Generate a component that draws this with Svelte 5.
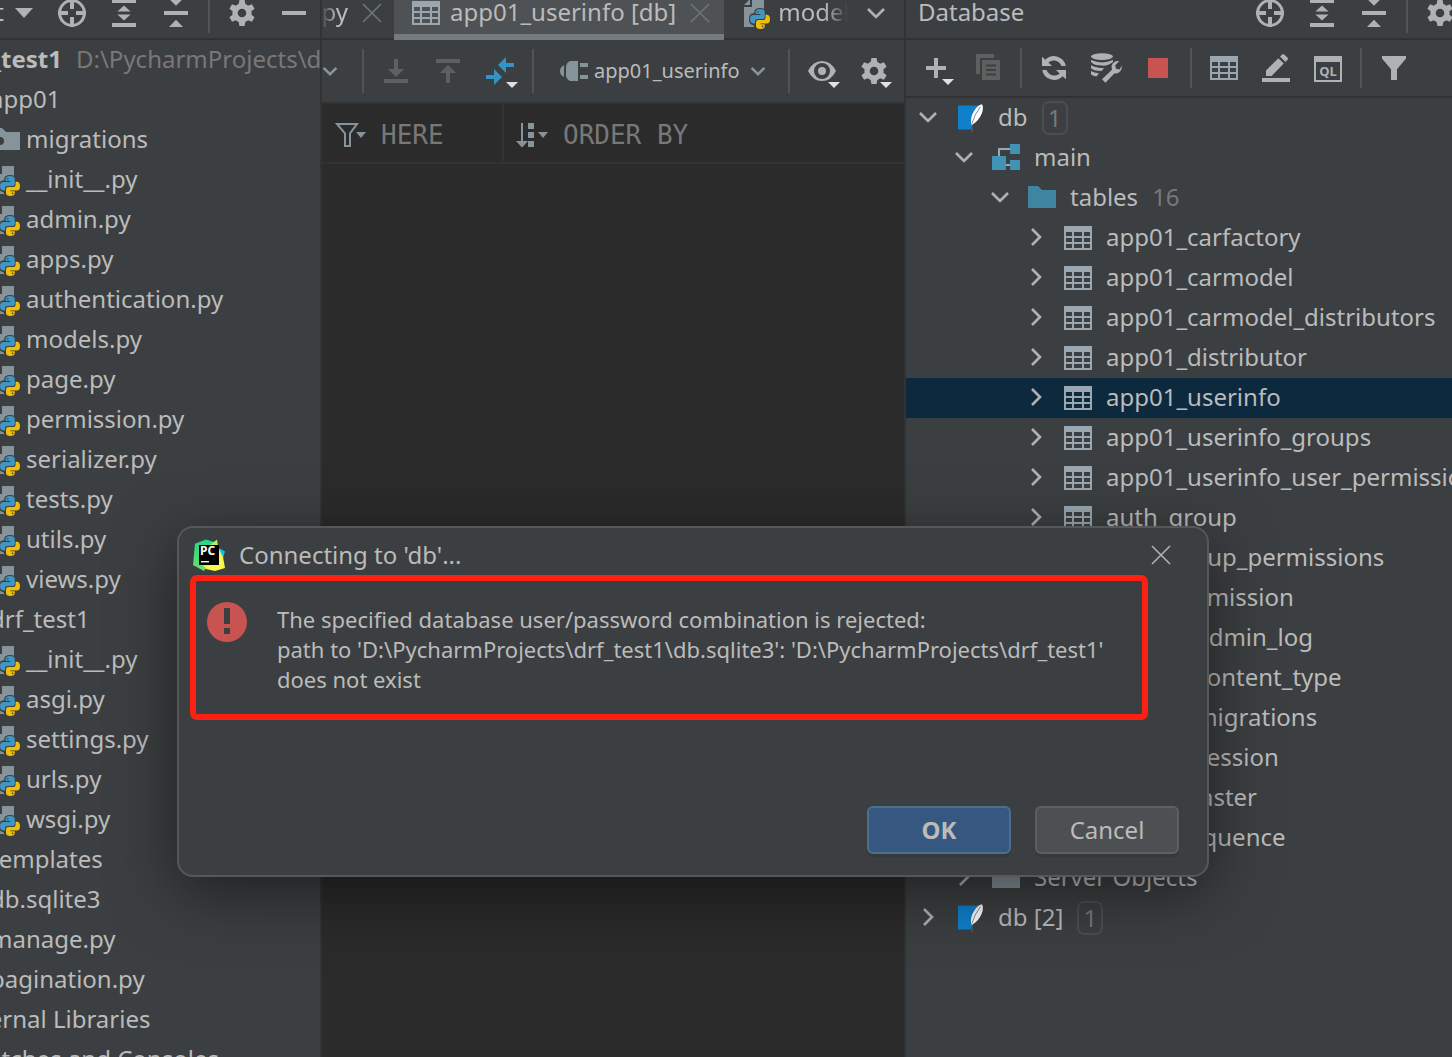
<script lang="ts">
  interface ProjectRow {
    label: string;
    depth: number;
    icon?: string;
    path?: string;
  }

  interface DbRow {
    label: string;
    depth: number;
    icon: string;
    open?: boolean;
    count?: string;
    badge?: string;
  }

  const projectRows: ProjectRow[] = [
    { label: "drf_test1", depth: 0, icon: "folder", path: "D:\\PycharmProjects\\drf_test1" },
    { label: "app01", depth: 1, icon: "package" },
    { label: "migrations", depth: 2, icon: "package" },
    ...["__init__.py", "admin.py", "apps.py", "authentication.py", "models.py", "page.py",
      "permission.py", "serializer.py", "tests.py", "utils.py", "views.py"].map((label) => ({
      label,
      depth: 2,
      icon: "python",
    })),
    { label: "drf_test1", depth: 1, icon: "package" },
    ...["__init__.py", "asgi.py", "settings.py", "urls.py", "wsgi.py"].map((label) => ({
      label,
      depth: 2,
      icon: "python",
    })),
    { label: "templates", depth: 1, icon: "folder" },
    { label: "db.sqlite3", depth: 1, icon: "sqlite" },
    { label: "manage.py", depth: 1, icon: "python" },
    { label: "pagination.py", depth: 1, icon: "python" },
    { label: "External Libraries", depth: 0, icon: "folder" },
    { label: "Scratches and Consoles", depth: 0, icon: "folder" },
  ];

  const tables = [
    "app01_carfactory",
    "app01_carmodel",
    "app01_carmodel_distributors",
    "app01_distributor",
    "app01_userinfo",
    "app01_userinfo_groups",
    "app01_userinfo_user_permissions",
    "auth_group",
    "auth_group_permissions",
    "auth_permission",
    "django_admin_log",
    "django_content_type",
    "django_migrations",
    "django_session",
    "sqlite_master",
    "sqlite_sequence",
  ];

  const dbRows: DbRow[] = [
    { label: "db", depth: 0, icon: "sqlite", open: true, badge: "1" },
    { label: "main", depth: 1, icon: "schema", open: true },
    { label: "tables", depth: 2, icon: "folder-blue", open: true, count: String(tables.length) },
    ...tables.map((label) => ({ label, depth: 3, icon: "table" })),
    { label: "Server Objects", depth: 1, icon: "folder" },
    { label: "db [2]", depth: 0, icon: "sqlite", badge: "1" },
  ];

  let selected = $state("app01_userinfo");
  let dialogOpen = $state(true);

  // Single-colour icons on a 16 unit grid
  const paths: Record<string, string> = {
    triangle: "M3.5 5.5h9L8 10.5z",
    expand: "M2 1h12v2H2zM2 13h12v2H2zM8 4.2l3.3 3H4.7zM8 11.8l3.3-3H4.7z",
    collapse: "M2 7h12v2H2zM8 4.4l3.8-3.8H4.2zM8 11.4l3.5 3.6h-7z",
    minus: "M2 7h12v2H2z",
    plus: "M7 3h2v4h4v2H9v4H7V9H3V7h4z",
    copy: "M2 1h9v2H4v8H2zM5 4h9v10H5zM7 6.3v1h5v-1zM7 8.5v1h5v-1zM7 10.7v1h5v-1z",
    stop: "M3 3h10v10H3z",
    table:
      "M1 2h14v12H1zM2 5v2h3V5zM6 5v2h4V5zM11 5v2h3V5zM2 8v2h3V8zM6 8v2h4V8zM11 8v2h3V8zM2 11v2h3v-2zM6 11v2h4v-2zM11 11v2h3v-2z",
    pencil: "M1 13h14v2H1zM3 12V9.2l6.2-6.1 2.7 2.7L5.8 12zM10 2.3l1.1-1.1q.5-.4 1 0l1.7 1.7q.4.5 0 1L12.7 5z",
    funnel: "M2 2h12v1.2L9.5 8.6V14h-3V8.6L2 3.2z",
    download: "M7 2h2v5h3l-4 4-4-4h3zM2 12h12v2H2z",
    upload: "M2 2h12v2H2zM8 5l4 4H9v5H7V9H4z",
    swap: "M7 5l4-4v3h4v2h-4v3zM1 10h4V7l4 4-4 4v-3H1z",
    plug: "M3 5v6Q1 10 1 8t2-3zM6 3h4v10H6Q4 12 4 10V6q0-2 2-3zM11 4h4v2h-4zM11 10h4v2h-4z",
    refresh:
      "M2 2.4l1.7 1.5A6 6 0 0 1 13.9 7h-2.2A4 4 0 0 0 5.2 5.3L7 7H2zM14 13.6l-1.7-1.5A6 6 0 0 1 2.1 9h2.2a4 4 0 0 0 6.5 1.7L9 9h5z",
    eye: "M1 8q2.5-5 7-5t7 5q-2.5 5-7 5T1 8zM8 4a4 4 0 1 0 0 8 4 4 0 0 0 0-8zM8 6a2 2 0 1 1 0 4 2 2 0 0 1 0-4z",
    folder: "M1 2h5l2 2h7v9H1z",
    package: "M1 2h5l2 2h7v9H1zM5 6.5a2 2 0 1 0 0 4 2 2 0 0 0 0-4z",
    "folder-blue": "M1 2h5l2 2h7v9H1z",
    sort: "M3.5 2h1v9H7l-3 3.2L1 11h2.5zM7 2h3v3H7zM7 6.5h3v3H7zM7 11h3v3H7z",
  };

  // Line icons, drawn with a stroke
  const lines: Record<string, string> = {
    down: "M4 6l4 4 4-4",
    right: "M6 4l4 4-4 4",
    "small-down": "M4.8 6.4L8 9.6l3.2-3.2",
    close: "M3.5 3.5l9 9M12.5 3.5l-9 9",
    "funnel-line": "M1.5 2.5h10L8 7.2v6.3H5.5V7.2z",
  };
</script>

{#snippet icon(name: string, drop = false)}
  <svg class="icon {name}" viewBox="0 0 16 16" aria-hidden="true">
    {#if paths[name]}
      <path d={paths[name]} fill="currentColor" fill-rule="evenodd" />
    {:else if lines[name]}
      <path d={lines[name]} fill="none" stroke="currentColor" />
    {:else if name === "target"}
      <circle cx="8" cy="8" r="6.2" fill="none" stroke="currentColor" stroke-width="1.5" />
      <path d="M7 1h2v5H7zM7 10h2v5H7zM1 7h5v2H1zM10 7h5v2h-5z" fill="currentColor" />
    {:else if name === "gear"}
      <circle cx="8" cy="8" r="3.5" fill="none" stroke="currentColor" stroke-width="2.7" />
      {#each [0, 60, 120, 180, 240, 300] as angle}
        <path d="M6.7 1.5h2.6l.4 2.4H6.3z" fill="currentColor" transform="rotate({angle} 8 8)" />
      {/each}
    {:else if name === "database-wrench"}
      <ellipse cx="6" cy="2.3" rx="5.5" ry="1.7" fill="currentColor" />
      <path
        d="M.5 4q5.5 2.4 11 0v1Q9 7 6 6.8 2 6.8.5 5zM.5 6.6Q3 8 7 8L5.8 9.5Q1.500 9.500.5 8zM.5 9.5q1.500 1 4 1.100L3.200 12.200Q1 12 .5 11z"
        fill="currentColor"
      />
      <path
        d="M6 13.6l5-4.700Q10.200 6.200 12.200 5q1.200-.8 2.400-.4l-2 2 .4 1.800 1.800.3 1-1.800q.4 2.200-1.300 3.300-1.200.7-2.200.4L7.700 15.400z"
        fill="currentColor"
      />
    {:else if name === "ql"}
      <path d="M1 2h14v13H1zM2 5v9h12V5z" fill="currentColor" fill-rule="evenodd" />
      <text x="8" y="12" text-anchor="middle" font-size="6.5" font-weight="700" fill="currentColor">QL</text>
    {:else if name === "schema"}
      <path d="M4.5 7V3.5H10M8 11.5h2" fill="none" stroke="#9aa7b0" />
      <path d="M10 1h5v5h-5zM1 7h7v7H1zM10 9h5v5h-5z" fill="#4193b3" />
    {:else if name === "sqlite"}
      <g transform="translate(1 0)">
        <path d="M1.5 1.8h10Q8.500 4.500 7.800 7.500L7.600 13.700H1.500q-.5 0-.5-.5V2.300q0-.5.500-.5z" fill="#0f80cc" />
        <path d="M7.700 11.800Q6.900 8 8.800 4.900 10.600 1.500 13 1.100q1 1.700-.1 4.700-1.600 3.600-4.200 5.200z" fill="#fff" />
        <path d="M12.200 2.400Q9 6.500 7.900 11l.2 4" fill="none" stroke="#66737c" stroke-width=".4" />
      </g>
    {:else if name === "python"}
      <path d="M2 5h4V1h6v14H2zM2 4l3-3v3z" fill="#87939a" />
      <g transform="translate(5 6)">
        <path
          d="M5 0Q2.600 0 2.600 1.800V2.600H1.800Q0 2.600 0 5t1.600 2.600h.8V8.400Q2.600 10 5.200 10t2.600-1.800V7.600h.7Q10 7.400 10 5T8.300 2.500H7.600V1.700Q7.400 0 5 0z"
          fill="#3c3f41"
          stroke="#3c3f41"
        />
        <path d="M5 0Q2.800 0 2.800 1.600V2.500H5.200V3H1.700Q0 3 0 5t1.700 2.300h.8V6.200Q2.500 5 3.800 5h2.600Q7.400 5 7.400 4V1.600Q7.400 0 5 0z" fill="#4296c3" />
        <path d="M5.200 10q2.200 0 2.200-1.500V7.600H5.200v-.4h3.200Q10 7.200 10 5.100T8.400 2.900h-.6v1.200q0 1.400-1.300 1.400H4.200Q3 5.500 3 6.600v1.900Q3 10 5.200 10z" fill="#f0bd0a" />
        <circle cx="3.9" cy="1.5" r=".4" fill="#3c3f41" />
        <circle cx="6.3" cy="8.7" r=".4" fill="#3c3f41" />
      </g>
    {:else if name === "pycharm"}
      <defs>
        <linearGradient id="pc-green" x1="0" y1="0" x2="0" y2="1">
          <stop offset="0" stop-color="#21d789" />
          <stop offset="1" stop-color="#6be06a" />
        </linearGradient>
        <linearGradient id="pc-yellow" x1="0" y1="0" x2="1" y2="1">
          <stop offset="0" stop-color="#5fdc74" />
          <stop offset=".6" stop-color="#fcf84a" />
        </linearGradient>
      </defs>
      <path d="M12 4l4 2.200-1.200 4L12 9z" fill="#07c3f2" />
      <path d="M1 2.400L6.500.2 10.500 1.500V9L5.500 16 0 13z" fill="url(#pc-green)" />
      <path d="M8 3.200L12 .2l.6 4L15 9l1 5.500-5 1.500-4.500-1L4 12z" fill="url(#pc-yellow)" />
      <path d="M3 3h10v10H3z" fill="#000" />
      <text x="3.500" y="8.200" font-size="6" font-weight="700" fill="#fff">PC</text>
      <path d="M4 11h4v.7H4z" fill="#fff" />
    {:else if name === "error"}
      <path d="M8 0a8 8 0 1 0 0 16A8 8 0 0 0 8 0zM6.8 2.400h2.400v6.400H6.800zM6.800 10.400h2.400v2.400H6.800z" fill="currentColor" fill-rule="evenodd" />
    {/if}
    {#if drop}
      <path class="drop" d="M11 13.5h6l-3 3z" />
    {/if}
  </svg>
{/snippet}

{#snippet tool(name: string, label: string, drop = false)}
  <button class="tool" aria-label={label}>{@render icon(name, drop)}</button>
{/snippet}

<div class="ide">
  <section class="panel project">
    <header class="head project-head">
      <span>Project</span>
      {@render icon("triangle")}
      <div class="tools">
        {@render tool("target", "Select opened file")}
        {@render tool("expand", "Expand all")}
        {@render tool("collapse", "Collapse all")}
        <i class="sep"></i>
        {@render tool("gear", "Options")}
        {@render tool("minus", "Hide")}
      </div>
    </header>
    <ul class="tree project-tree">
      {#each projectRows as row}
        <li class="row depth-{row.depth}">
          {@render icon(row.icon ?? "folder")}
          <span class:root={row.path}>{row.label}</span>
          {#if row.path}<span class="path">{row.path}</span>{/if}
        </li>
      {/each}
    </ul>
  </section>

  <section class="panel editor">
    <div class="head tabs">
      <div class="tab tab-first">
        <span class="fade-left">py</span>
        <button class="close-tab" aria-label="Close tab">{@render icon("close")}</button>
      </div>
      <div class="tab active">
        {@render icon("table")}
        <span>app01_userinfo [db]</span>
        <button class="close-tab" aria-label="Close tab">{@render icon("close")}</button>
      </div>
      <div class="tab tab-last">
        {@render icon("python")}
        <span>models.py</span>
      </div>
      <button class="tool more" aria-label="More tabs">{@render icon("down")}</button>
    </div>

    <div class="toolbar editor-toolbar">
      <button class="tool muted" aria-label="Page">{@render icon("small-down")}</button>
      <i class="sep"></i>
      {@render tool("download", "Import")}
      {@render tool("upload", "Export")}
      {@render tool("swap", "Compare", true)}
      <i class="sep"></i>
      <label class="source">
        {@render icon("plug")}
        <select aria-label="Table">
          <option>app01_userinfo</option>
        </select>
        {@render icon("small-down")}
      </label>
      <i class="sep"></i>
      {@render tool("eye", "View", true)}
      {@render tool("gear", "Settings", true)}
    </div>

    <div class="filters">
      <label class="where">
        {@render icon("funnel-line")}
        <i class="mini"></i>
        <input placeholder="HERE" aria-label="Where" />
      </label>
      <label class="order">
        {@render icon("sort")}
        <i class="mini"></i>
        <input placeholder="ORDER BY" aria-label="Order by" />
      </label>
    </div>
    <div class="grid-area"></div>
  </section>

  <section class="panel database">
    <header class="head db-head">
      <span>Database</span>
      <div class="tools">
        {@render tool("target", "Select opened table")}
        {@render tool("expand", "Expand all")}
        {@render tool("collapse", "Collapse all")}
        <i class="sep"></i>
        {@render tool("gear", "Options")}
      </div>
    </header>
    <div class="toolbar db-toolbar">
      {@render tool("plus", "New", true)}
      {@render tool("copy", "Duplicate")}
      <i class="sep"></i>
      {@render tool("refresh", "Refresh")}
      {@render tool("database-wrench", "Data source properties")}
      {@render tool("stop", "Disconnect")}
      <i class="sep"></i>
      {@render tool("table", "Open table")}
      {@render tool("pencil", "Modify")}
      {@render tool("ql", "Query console")}
      <i class="sep"></i>
      {@render tool("funnel", "Filter")}
    </div>
    <ul class="tree db-tree">
      {#each dbRows as row}
        <li>
          <button
            class="row depth-{row.depth}"
            class:selected={row.label === selected}
            onclick={() => (selected = row.label)}
          >
            <span class="arrow">{@render icon(row.open ? "down" : "right")}</span>
            {@render icon(row.icon)}
            <span>{row.label}</span>
            {#if row.count}<span class="count">{row.count}</span>{/if}
            {#if row.badge}<span class="badge">{row.badge}</span>{/if}
          </button>
        </li>
      {/each}
    </ul>
  </section>
</div>

{#if dialogOpen}
  <div class="dialog" role="dialog" aria-labelledby="dialog-title">
    <div class="dialog-title">
      {@render icon("pycharm")}
      <span id="dialog-title">Connecting to 'db'...</span>
      <button class="tool" aria-label="Close" onclick={() => (dialogOpen = false)}>{@render icon("close")}</button>
    </div>
    <div class="message">
      {@render icon("error")}
      <p>
        The specified database user/password combination is rejected:<br />
        path to 'D:\PycharmProjects\drf_test1\db.sqlite3': 'D:\PycharmProjects\drf_test1'<br />
        does not exist
      </p>
    </div>
    <div class="actions">
      <button class="btn primary" onclick={() => (dialogOpen = false)}>OK</button>
      <button class="btn" onclick={() => (dialogOpen = false)}>Cancel</button>
    </div>
  </div>
{/if}

<style>
  :global(body) {
    background: #3c3f41;
    overflow: hidden;
  }

  .ide,
  .dialog {
    font-family: "Noto Sans", "Open Sans", sans-serif;
    font-size: 24px;
    line-height: 32px;
    color: #bbbbbb;
    white-space: nowrap;
  }

  .ide {
    display: grid;
    grid-template-columns: 322px minmax(0, 1fr) 546px;
    height: calc(100vh + 12px);
    margin-top: -12px;
    background: #3c3f41;
  }

  button,
  input,
  select {
    font: inherit;
    color: inherit;
    background: none;
    border: 0;
    margin: 0;
    padding: 0;
    outline: 0;
  }

  .panel {
    display: flex;
    flex-direction: column;
    min-width: 0;
    overflow: hidden;
  }

  .project,
  .editor {
    border-right: 2px solid #323232;
  }

  .icon {
    display: block;
    flex: none;
    width: 32px;
    height: 32px;
    overflow: visible;
    color: #afb1b3;
  }

  .drop {
    fill: #dfe1e3;
  }

  .head {
    display: flex;
    align-items: center;
    flex: none;
    box-sizing: border-box;
    height: 52px;
    border-bottom: 2px solid #323232;
  }

  .head span,
  .row > span:not(.badge) {
    padding-bottom: 2px;
  }

  .tools,
  .toolbar {
    display: flex;
    align-items: center;
    gap: 20px;
  }

  .tool {
    flex: none;
    width: 32px;
    height: 32px;
  }

  .sep {
    flex: none;
    width: 2px;
    height: 40px;
    margin: 0 -4px;
    background: #515354;
  }

  .project-head {
    justify-content: flex-end;
    gap: 4px;
    padding-right: 10px;
  }

  .project-head .tools {
    margin-left: 12px;
  }

  .db-head {
    justify-content: space-between;
    margin-right: -4px;
    padding-left: 12px;
  }

  .tree {
    list-style: none;
    margin: 0;
    padding: 0;
  }

  .row {
    display: flex;
    align-items: center;
    box-sizing: border-box;
    width: 100%;
    height: 40px;
    text-align: left;
  }

  .project-tree {
    margin-left: -82px;
  }

  .project-tree .row {
    gap: 4px;
  }

  .project-tree .depth-1 {
    padding-left: 36px;
  }

  .project-tree .depth-2 {
    padding-left: 72px;
  }

  .root {
    margin-left: 2px;
    font-weight: 700;
  }

  .path {
    margin-left: 10px;
    color: #787878;
  }

  .folder,
  .package {
    color: #87939a;
  }

  .folder-blue {
    color: #3e86a0;
  }

  .table {
    color: #9aa7b0;
  }

  .tabs {
    align-items: stretch;
  }

  .tab {
    display: flex;
    align-items: center;
    box-sizing: border-box;
    overflow: hidden;
  }

  .tab-first {
    flex: none;
    justify-content: flex-end;
    width: 72px;
    padding-right: 6px;
    gap: 8px;
  }

  .fade-left {
    mask-image: linear-gradient(to right, transparent, #000 16px);
  }

  .tab.active {
    position: relative;
    flex: none;
    gap: 8px;
    height: 52px;
    padding: 0 8px 2px 16px;
    background: #4e5254;
  }

  .tab.active::after {
    content: "";
    position: absolute;
    left: 0;
    right: 0;
    bottom: 0;
    height: 6px;
    background: #747a80;
  }

  .close-tab .icon {
    color: #6e7577;
    stroke-width: 0.8;
  }

  .tab-last {
    flex: 1;
    gap: 6px;
    padding-left: 16px;
    mask-image: linear-gradient(to left, transparent, transparent 12px, #000 36px);
  }

  .more {
    align-self: center;
    margin-right: 12px;
  }

  .editor-toolbar {
    height: 62px;
    margin-left: -8px;
    padding-right: 14px;
    border-bottom: 2px solid #323232;
  }

  .editor-toolbar .sep {
    height: 44px;
  }

  .muted .icon,
  .source .icon {
    color: #87939a;
  }

  .download,
  .upload,
  .copy {
    color: #5e6060;
  }

  .swap {
    color: #3592c4;
  }

  .stop {
    color: #c75450;
  }

  .source {
    display: flex;
    align-items: center;
    flex: 1;
    gap: 4px;
    min-width: 0;
    margin-right: -2px;
    padding-left: 8px;
    font-size: 20px;
  }

  .source select {
    flex: 1;
    min-width: 0;
    appearance: none;
  }

  .source .small-down {
    margin-left: -8px;
  }

  .filters {
    display: flex;
    height: 54px;
    padding-top: 4px;
    background: #2b2b2b;
    border-bottom: 2px solid #323232;
    font-family: "DejaVu Sans Mono", monospace;
    font-size: 26px;
  }

  .filters label {
    display: flex;
    align-items: center;
    box-sizing: border-box;
    margin-top: -4px;
    padding: 4px 0 0 12px;
  }

  .filters .icon {
    color: #87939a;
  }

  .filters input {
    flex: 1;
    min-width: 0;
  }

  .filters input::placeholder {
    color: #787878;
    opacity: 1;
  }

  .where {
    width: 182px;
    border-right: 2px solid #323232;
  }

  .filters .order {
    flex: 1;
    padding-left: 10px;
  }

  .mini {
    width: 0;
    margin: 0 15px 0 -10px;
    border: 5px solid transparent;
    border-top: 6px solid #87939a;
    border-bottom: 0;
  }

  .order .mini {
    margin-left: -8px;
  }

  .grid-area {
    flex: 1;
    background: #2b2b2b;
  }

  .db-toolbar {
    height: 56px;
    flex: none;
    padding-left: 14px;
    border-bottom: 2px solid #323232;
  }

  .db-tree .row {
    padding-left: 6px;
  }

  .db-tree .depth-1 {
    padding-left: 42px;
  }

  .db-tree .depth-2 {
    padding-left: 78px;
  }

  .db-tree .depth-3 {
    padding-left: 114px;
  }

  .arrow {
    margin-right: 10px;
  }

  .db-tree .row > .icon {
    margin-right: 12px;
  }

  .row.selected {
    background: #0d293e;
  }

  .down,
  .right,
  .small-down {
    stroke-width: 1.3;
  }

  .count,
  .badge {
    margin-left: 14px;
    color: #787878;
  }

  .badge {
    box-sizing: border-box;
    min-width: 26px;
    padding: 0 4px;
    border: 2px solid #4b4e50;
    border-radius: 7px;
    text-align: center;
    line-height: 30px;
  }

  .dialog {
    position: absolute;
    left: 177px;
    top: 526px;
    box-sizing: border-box;
    width: 1032px;
    height: 351px;
    display: flex;
    flex-direction: column;
    background: #3c3f41;
    border: 2px solid #555759;
    border-radius: 16px;
    box-shadow: 0 16px 64px rgba(0, 0, 0, 0.5);
  }

  .dialog-title {
    display: flex;
    align-items: center;
    gap: 14px;
    height: 47px;
    padding: 6px 30px 0 14px;
    box-sizing: border-box;
    flex: none;
  }

  .dialog-title .tool {
    margin-left: auto;
  }

  .dialog-title .close {
    stroke-width: 0.8;
  }

  .message {
    display: flex;
    gap: 30px;
    margin: 0 59px 0 11px;
    padding: 21px 11px 20px;
    border: 6px solid #ff2015;
    border-radius: 7px;
    font-size: 22px;
    line-height: 30px;
  }

  .message p {
    margin: 2px 0 0;
  }

  .error {
    width: 40px;
    height: 40px;
    color: #c75450;
  }

  .actions {
    display: flex;
    justify-content: flex-end;
    gap: 24px;
    margin-top: auto;
    padding: 0 28px 21px 0;
  }

  .btn {
    box-sizing: border-box;
    width: 144px;
    height: 48px;
    background: #4c5052;
    border: 2px solid #5e6060;
    border-radius: 6px;
    box-shadow: 0 3px 1px rgba(50, 50, 50, 0.5);
  }

  .btn.primary {
    background: #365880;
    border-color: #4c708c;
    font-weight: 700;
  }
</style>
